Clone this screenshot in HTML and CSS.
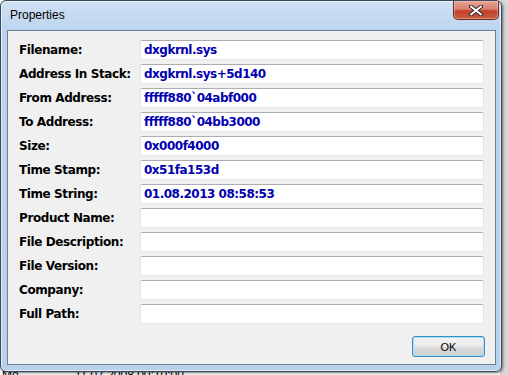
FILE: index.html
```html
<!DOCTYPE html>
<html lang="en">
<head>
  <meta charset="UTF-8" />
  <title>Properties</title>
  <link rel="stylesheet" href="styles.css">
</head>
<body>
  <div class="desk">
    <div class="desk-row">
      <span class="desk-cell">Mo</span>
      <span class="desk-cell">11.07.2008 00:10:00</span>
    </div>
  </div>

  <div class="window">
    <div class="titlebar">
      <span class="title">Properties</span>
      <button class="close" type="button">
        <svg width="14" height="11" viewBox="0 0 14 11">
          <path d="M2 1.5 L12 9.5 M12 1.5 L2 9.5" stroke="#3a2a28" stroke-width="4" stroke-linecap="round"/>
          <path d="M2 1.5 L12 9.5 M12 1.5 L2 9.5" stroke="#ffffff" stroke-width="2" stroke-linecap="round"/>
        </svg>
      </button>
    </div>

    <div class="client">
      <div class="fields">
        <label>Filename:</label>
        <div class="field">dxgkrnl.sys</div>
        <label>Address In Stack:</label>
        <div class="field">dxgkrnl.sys+5d140</div>
        <label>From Address:</label>
        <div class="field">fffff880`04abf000</div>
        <label>To Address:</label>
        <div class="field">fffff880`04bb3000</div>
        <label>Size:</label>
        <div class="field">0x000f4000</div>
        <label>Time Stamp:</label>
        <div class="field">0x51fa153d</div>
        <label>Time String:</label>
        <div class="field">01.08.2013 08:58:53</div>
        <label>Product Name:</label>
        <div class="field"></div>
        <label>File Description:</label>
        <div class="field"></div>
        <label>File Version:</label>
        <div class="field"></div>
        <label>Company:</label>
        <div class="field"></div>
        <label>Full Path:</label>
        <div class="field"></div>
      </div>

      <div class="footer">
        <button class="ok-btn" type="button">OK</button>
      </div>
    </div>
  </div>
</body>
</html>
```

FILE: styles.css
```css
* {
  box-sizing: border-box;
}

body {
  margin: 0;
  width: 508px;
  height: 375px;
  overflow: hidden;
  position: relative;
  background: #ffffff;
  font-family: "Liberation Sans", Arial, sans-serif;
}

/* what lies behind the dialog */
.desk {
  height: 375px;
  display: flex;
  flex-direction: column;
  justify-content: flex-end;
  background: linear-gradient(90deg, #ffffff 0, #ffffff 500px, #d9d9d9 500px);
}

.desk-row {
  height: 5px;
  overflow: hidden;
  display: flex;
  gap: 56px;
  padding-left: 2px;
  font-size: 12px;
  line-height: 12px;
  color: #000;
}

.desk-cell {
  margin-top: -1px;
}

.window {
  position: absolute;
  left: 0;
  top: 0;
  width: 502px;
  height: 372px;
  border: 1px solid #3b4a5c;
  border-radius: 6px;
  padding: 0 5px 6px 6px;
  display: flex;
  flex-direction: column;
  background: linear-gradient(180deg, #cfe1f4 0, #bcd4ee 30px, #b9d1ea 100%);
  box-shadow: 1px 1px 3px rgba(0, 0, 0, 0.55), inset 0 0 0 1px rgba(255, 255, 255, 0.55);
}

.titlebar {
  height: 29px;
  display: flex;
  align-items: flex-start;
}

.title {
  padding: 7px 0 0 3px;
  font-size: 12px;
  color: #000;
}

.close {
  margin-left: auto;
  margin-right: -3px;
  width: 46px;
  height: 19px;
  padding: 0;
  border: 1px solid #6b2a20;
  border-top: none;
  border-radius: 0 0 5px 5px;
  background: linear-gradient(180deg, #e8a594 0, #d8806d 45%, #c1412b 55%, #c65a3f 100%);
  display: flex;
  align-items: center;
  justify-content: center;
  box-shadow: inset 0 0 0 1px rgba(255, 210, 200, 0.45);
}

.client {
  flex: 1;
  border: 1px solid #6e7e90;
  background: #f0f0f0;
  padding: 9px 10px 7px 11px;
  display: flex;
  flex-direction: column;
}

.fields {
  display: grid;
  grid-template-columns: 121px 344px;
  grid-auto-rows: 20px;
  row-gap: 4px;
}

.fields label {
  display: flex;
  align-items: center;
  font-family: "DejaVu Sans", Verdana, sans-serif;
  font-size: 12px;
  font-weight: bold;
  letter-spacing: -0.4px;
  color: #000;
}

.field {
  background: #ffffff;
  border: 1px solid #dbdfe6;
  border-top-color: #abadb3;
  border-left-color: #e2e3ea;
  border-bottom-color: #e3e9ef;
  border-radius: 2px;
  padding: 0 3px;
  font-family: "DejaVu Sans", Verdana, sans-serif;
  font-size: 12px;
  font-weight: bold;
  letter-spacing: -0.5px;
  line-height: 18px;
  color: #0000b0;
  white-space: nowrap;
  overflow: hidden;
}

.footer {
  margin-top: 12px;
  display: flex;
  justify-content: flex-end;
}

.ok-btn {
  width: 73px;
  height: 21px;
  padding: 0;
  border: 1px solid #3c8fc4;
  border-radius: 3px;
  background: linear-gradient(180deg, #f4f4f4 0, #ebebeb 48%, #dcdcdc 52%, #d0d0d0 100%);
  box-shadow: inset 0 0 0 1px #a9dcf5;
  font-family: "Liberation Sans", Arial, sans-serif;
  font-size: 11px;
  color: #000;
}
```
